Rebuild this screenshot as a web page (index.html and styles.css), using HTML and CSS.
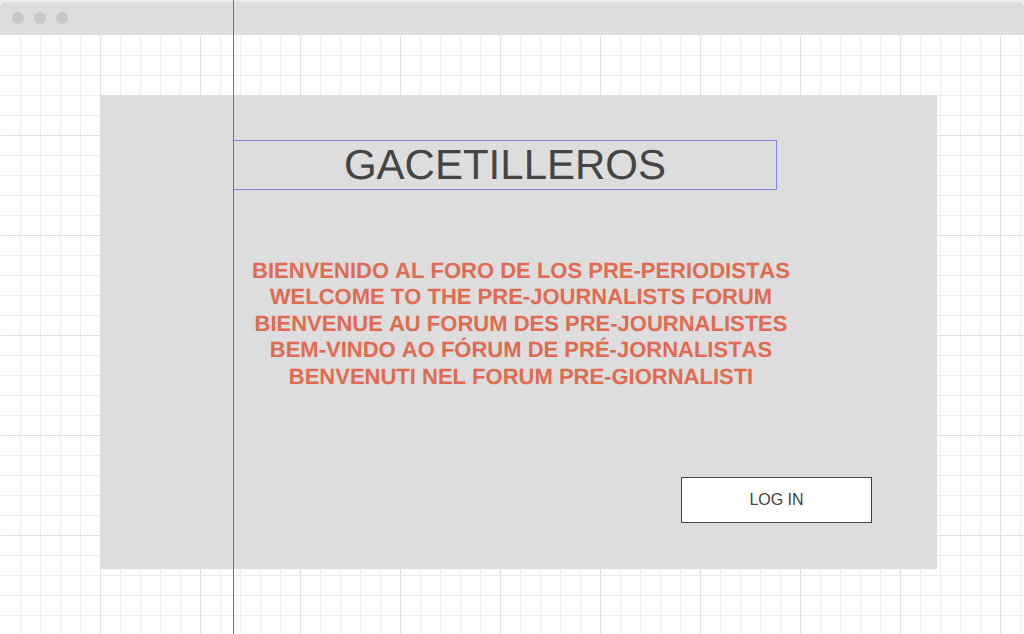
FILE: index.html
```html
<!DOCTYPE html>
<html lang="es">
<head>
<meta charset="utf-8">
<meta name="viewport" content="width=device-width, initial-scale=1">
<title>Gacetilleros</title>
<link rel="stylesheet" href="styles.css">
</head>
<body>
<div class="window">
  <header class="titlebar">
    <span class="dot"></span>
    <span class="dot"></span>
    <span class="dot"></span>
  </header>
  <main class="canvas">
    <section class="card">
      <h1 class="title">GACETILLEROS</h1>
      <div class="welcome">
        <p class="line" lang="es">BIENVENIDO AL FORO DE LOS PRE-PERIODISTAS</p>
        <p class="line" lang="en">WELCOME TO THE PRE-JOURNALISTS FORUM</p>
        <p class="line" lang="fr">BIENVENUE AU FORUM DES PRE-JOURNALISTES</p>
        <p class="line" lang="pt">BEM-VINDO AO FÓRUM DE PRÉ-JORNALISTAS</p>
        <p class="line" lang="it">BENVENUTI NEL FORUM PRE-GIORNALISTI</p>
      </div>
      <button class="login" type="button">LOG IN</button>
    </section>
  </main>
  <div class="guide"></div>
</div>
</body>
</html>
```

FILE: styles.css
```css
* {
  box-sizing: border-box;
}

body {
  margin: 0;
  background: #ececec;
  color: #444;
  font-family: "Liberation Sans", Arial, sans-serif;
  font-kerning: none;
  text-rendering: geometricPrecision;
}

.window {
  position: relative;
  display: flex;
  flex-direction: column;
  min-height: 100vh;
  padding-top: 2px;
}

.titlebar {
  display: flex;
  align-items: center;
  gap: 10px;
  height: 33px;
  padding: 0 12px 2px;
  background: #ddd;
  border-radius: 5px 5px 0 0;
}

.dot {
  width: 12px;
  height: 12px;
  border-radius: 50%;
  background: #c9c9c9;
}

/* Minor grid every 20px, major grid every 100px */
.canvas {
  flex: 1;
  padding: 59px 87px 64px 100px;
  border: solid #fff;
  border-width: 1px 0 0 1px;
  background-color: #fff;
  background-image:
    linear-gradient(to right, transparent 99px, #e0e0e0 99px),
    linear-gradient(to bottom, transparent 99px, #e0e0e0 99px),
    linear-gradient(to right, transparent 19px, #eee 19px),
    linear-gradient(to bottom, transparent 19px, #eee 19px);
  background-size: 100px 100px, 100px 100px, 20px 20px, 20px 20px;
  background-clip: padding-box;
}

.card {
  display: flex;
  flex-direction: column;
  padding: 45px 65px 46px 132px;
  background: #ddd;
}

.title {
  width: 100%;
  max-width: 544px;
  margin: 0 0 68px;
  border: 1px solid #7f87e6;
  font-size: 42px;
  font-weight: 400;
  line-height: 48px;
  text-align: center;
}

.welcome {
  max-width: 576px;
  margin-bottom: 87px;
  color: #df6b52;
  font-size: 22px;
  font-weight: 700;
  line-height: 1.2;
  text-align: center;
}

.line {
  margin: 0;
}

.login {
  align-self: flex-end;
  width: 191px;
  height: 46px;
  padding: 0;
  border: 1px solid #444;
  background: #fff;
  color: #444;
  font: 16px "Liberation Sans", Arial, sans-serif;
}

/* Alignment guide laid over the whole window */
.guide {
  position: absolute;
  top: 0;
  bottom: 0;
  left: 233px;
  width: 1px;
  background: #6167dc;
}
```
